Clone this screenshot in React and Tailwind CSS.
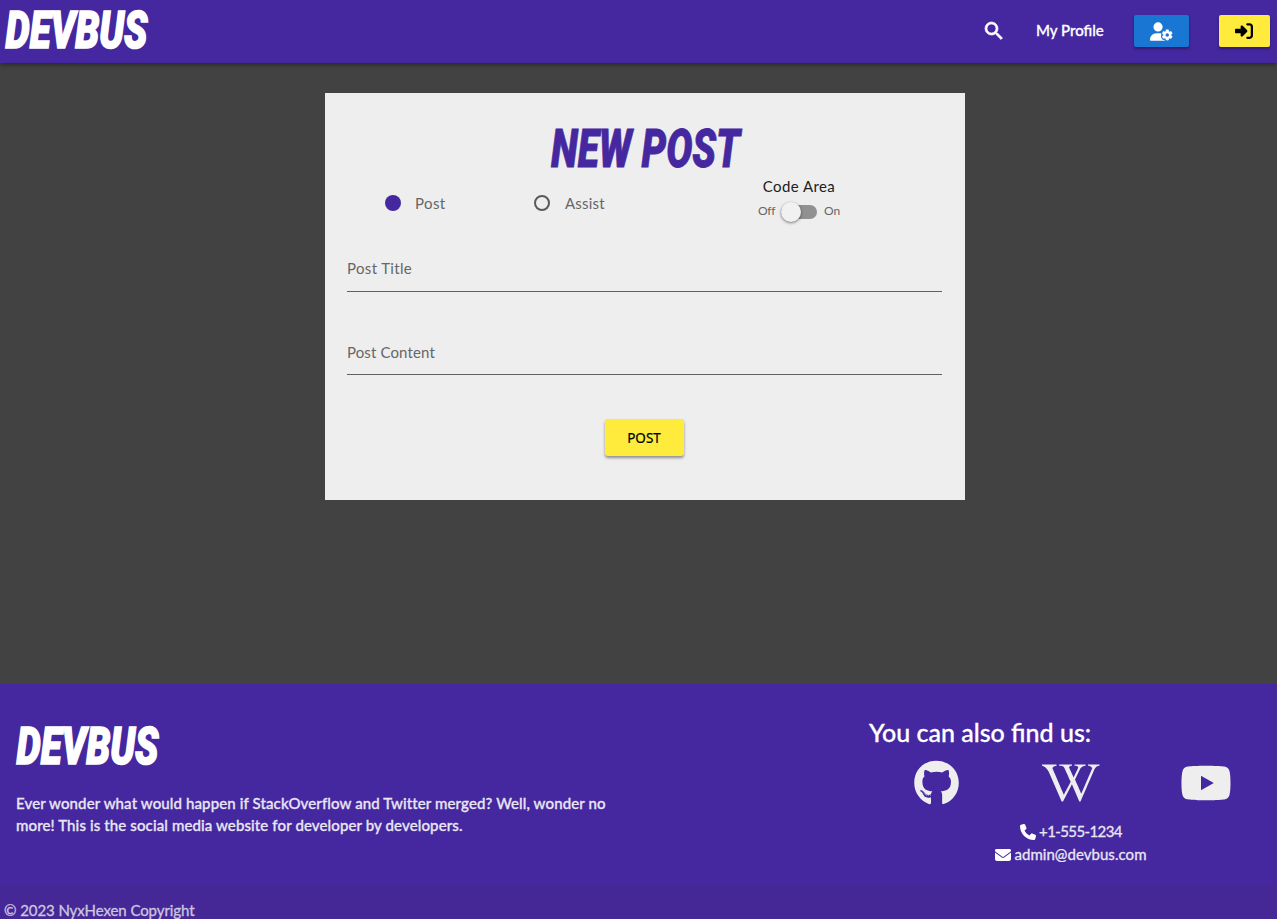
import {
  FaUserGear,
  FaRightToBracket,
  FaGithub,
  FaWikipediaW,
  FaYoutube,
  FaPhone,
  FaEnvelope,
} from "react-icons/fa6";

function Wordmark() {
  return (
    <svg
      width="160"
      height="72"
      viewBox="-4 -8 160 72"
      className="-my-3 -ml-1 shrink-0 overflow-visible"
      role="img"
      aria-label="DEVBUS"
    >
      <text
        x="1.5"
        y="46.5"
        textLength="142"
        lengthAdjust="spacingAndGlyphs"
        className="fill-white stroke-white font-['Roboto'] text-[52px] font-black italic"
        strokeWidth="1.6"
      >
        DEVBUS
      </text>
    </svg>
  );
}

function SearchIcon() {
  return (
    <svg viewBox="0 0 24 24" className="mr-[-1px] size-6" fill="white" stroke="white" strokeWidth="0.7">
      <path d="M15.5 14h-.79l-.28-.27A6.471 6.471 0 0 0 16 9.5 6.5 6.5 0 1 0 9.5 16c1.61 0 3.09-.59 4.23-1.57l.27.28v.79l5 4.99L20.49 19l-4.99-5zm-6 0C7.01 14 5 11.99 5 9.5S7.01 5 9.5 5 14 7.01 14 9.5 11.99 14 9.5 14z" />
    </svg>
  );
}

function Header() {
  return (
    <header className="relative z-10 flex h-[63px] shrink-0 items-start justify-between bg-[#45289f] shadow-[0_2px_4px_rgba(0,0,0,0.4)]">
      <div className="flex pt-[5px] pl-1">
        <Wordmark />
      </div>
      <nav className="flex h-[62px] items-center pr-[7px] text-white">
        <SearchIcon />
        <a className="-mt-px ml-[31px] w-[69px] text-[15px] font-medium whitespace-nowrap [-webkit-text-stroke:0.3px]">
          My Profile
        </a>
        <button className="ml-[29px] flex h-8 w-[55px] items-center justify-center rounded-[2px] bg-[#1976d2] pr-px shadow-[0_2px_3px_rgba(0,0,0,0.35)]">
          <FaUserGear className="h-[19px] w-[23px]" />
        </button>
        <button className="ml-[30px] flex h-8 w-[51px] items-center justify-center rounded-[2px] bg-[#ffeb3b] pr-[2px] text-black shadow-[0_2px_3px_rgba(0,0,0,0.35)]">
          <FaRightToBracket className="size-[18px]" />
        </button>
      </nav>
    </header>
  );
}

function PostForm() {
  return (
    <form className="ml-[325px] h-[407px] w-[640px] bg-[#eee] px-[22px] pt-[30px]">
      <h1 className="flex h-[50px] justify-center pl-1">
        <svg
          width="206"
          height="74"
          viewBox="-6 -12 206 74"
          className="-my-3 shrink-0 overflow-visible"
          role="img"
          aria-label="NEW POST"
        >
          <text
            x="1"
            y="44.3"
            textLength="189"
            lengthAdjust="spacingAndGlyphs"
            className="fill-[#45289f] stroke-[#45289f] font-['Roboto'] text-[53px] font-black italic"
            strokeWidth="0.8"
          >
            NEW POST
          </text>
        </svg>
      </h1>
      <div className="flex h-[60px] items-start pl-[38px] text-[#666]">
        <label className="flex w-[149px] items-center pt-[18px] text-[15px] leading-6 tracking-[0.4px]">
          <span className="mt-[-1px] mr-[14px] size-4 rounded-full bg-[#45289f]" />
          Post
        </label>
        <label className="flex w-[223px] items-center pt-[18px] text-[15px] leading-6 tracking-[0.2px]">
          <span className="mt-[-1px] mr-[15px] size-4 rounded-full border-2 border-[#5a5a5a]" />
          Assist
        </label>
        <div className="flex w-[84px] flex-col items-center pt-1">
          <span className="text-[15px] leading-[18px] tracking-[0.4px] whitespace-nowrap text-[#212121]">
            Code Area
          </span>
          <div className="mt-[7px] flex h-5 w-[82px] items-center justify-between text-[12px]">
            <span className="-mt-0.5 tracking-[-0.2px]">Off</span>
            <span className="mr-px flex h-[14px] w-9 items-center rounded-full bg-[#919191]">
              <span className="size-5 shrink-0 rounded-full bg-[#f1f1f1] shadow-[0_1px_3px_rgba(0,0,0,0.5)]" />
            </span>
            <span className="-mt-0.5 tracking-[-0.1px]">On</span>
          </div>
        </div>
      </div>
      <div className="mt-[22px] h-[37px] w-[595px] border-b border-[#616161] pt-px text-[15px] leading-6 tracking-[0.35px] text-[#666]">
        Post Title
      </div>
      <div className="mt-[46px] h-[37px] w-[595px] border-b border-[#616161] pt-[2px] text-[15px] leading-6 tracking-[0.13px] text-[#666]">
        Post Content
      </div>
      <div className="mt-11 flex w-[594px] justify-center">
        <button
          type="button"
          className="h-[37px] w-[79px] rounded-[3px] bg-[#ffeb3b] pt-px font-['Noto_Sans'] text-[13.5px] font-normal text-black shadow-[0_2px_3px_rgba(0,0,0,0.4)] [-webkit-text-stroke:0.2px]"
        >
          POST
        </button>
      </div>
    </form>
  );
}

function Footer() {
  return (
    <footer className="flex h-[235px] shrink-0 flex-col bg-[#45289f] text-[#e9e6f3]">
      <div className="flex h-[202px] justify-between">
        <div className="flex flex-col pt-[37px] pl-[15px]">
          <Wordmark />
          <p className="mt-[23px] pl-px text-[15px] leading-[22px] font-medium tracking-[0.12px] whitespace-nowrap [-webkit-text-stroke:0.3px]">
            Ever wonder what would happen if StackOverflow and Twitter merged? Well, wonder no
            <br />
            more! This is the social media website for developer by developers.
          </p>
        </div>
        <div className="w-[408px] pt-8">
          <h2 className="text-[25px] leading-8 font-medium whitespace-nowrap text-white [-webkit-text-stroke:0.3px]">
            You can also find us:
          </h2>
          <div className="mt-3 grid w-[404px] grid-cols-3 justify-items-center text-[46px] text-[#eee]">
            <FaGithub className="h-[46px] w-[45px]" />
            <FaWikipediaW className="h-[46px] w-[57.5px]" />
            <FaYoutube className="h-[46px] w-[52px]" />
          </div>
          <div className="mt-[14px] flex w-[404px] flex-col items-center text-[15px] leading-[23px] [-webkit-text-stroke:0.3px]">
            <p className="flex items-center gap-[3px] tracking-[-0.6px]">
              <FaPhone className="size-4 text-white" />
              +1-555-1234
            </p>
            <p className="flex items-center gap-[3px] tracking-[0.05px]">
              <FaEnvelope className="size-4 text-white" />
              admin@devbus.com
            </p>
          </div>
        </div>
      </div>
      <div className="h-[33px] bg-[#452896] pt-[14px] pl-1 text-[15px] leading-5 tracking-[-0.08px] text-[#cdc6e1] [-webkit-text-stroke:0.3px]">
        © 2023 NyxHexen Copyright
      </div>
    </footer>
  );
}

export default function App() {
  return (
    <div className="flex h-[919px] w-[1277px] flex-col bg-[#424242] font-['Lato','Liberation_Sans',sans-serif]">
      <Header />
      <main className="flex-1 pt-[30px]">
        <PostForm />
      </main>
      <Footer />
    </div>
  );
}
